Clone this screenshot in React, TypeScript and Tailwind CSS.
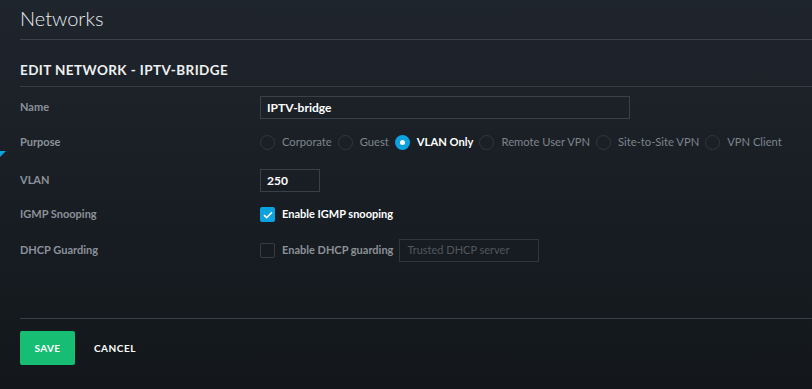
import React from "react";

function Radio({ label, checked }: { label: string; checked?: boolean }) {
  return (
    <div className="flex items-center">
      {checked ? (
        <span className="w-[15px] h-[15px] rounded-full bg-[#0aa3e0] flex items-center justify-center">
          <span className="w-[5px] h-[5px] rounded-full bg-white" />
        </span>
      ) : (
        <span className="w-[15px] h-[15px] rounded-full border border-[#31373e]" />
      )}
      <span
        className={
          "ml-[7px] mr-[6px] text-[11.2px] " +
          (checked ? "text-white font-bold" : "text-[#7d848c]")
        }
      >
        {label}
      </span>
    </div>
  );
}

export default function App() {
  return (
    <div
      className="relative w-[812px] h-[389px] overflow-hidden bg-gradient-to-b from-[#1f252d] to-[#13171b] text-white"
      style={{ fontFamily: "Lato, 'Noto Sans', sans-serif" }}
    >
      <div className="absolute left-0 top-[151px] w-0 h-0 border-t-[6px] border-t-[#0aa3e0] border-r-[6px] border-r-transparent" />
      <div className="pl-5">
        <div className="h-[40px] border-b border-[#3b4148] flex items-center">
          <span className="text-[20px] font-light text-[#e9ecef] -mt-[4px]">Networks</span>
        </div>
        <div className="h-[47px] border-b border-[#363c43] flex items-end pb-[6px]">
          <span className="text-[13.5px] font-bold tracking-[0.03em] text-[#eef0f2] leading-[20px]">
            EDIT NETWORK - IPTV-BRIDGE
          </span>
        </div>
        <div className="h-[232px] border-b border-[#3a3f45] pt-[9px]">
          <div className="flex items-center h-[23px]">
            <div className="w-[240px] text-[11px] font-bold text-[#8b9199]">Name</div>
            <div className="w-[370px] h-[23px] border border-[#3a4047] flex items-center px-[6px] text-[12px] font-bold text-white">
              IPTV-bridge
            </div>
          </div>
          <div className="flex items-center h-[23px] mt-[12px]">
            <div className="w-[240px] text-[11px] font-bold text-[#8b9199]">Purpose</div>
            <Radio label="Corporate" />
            <Radio label="Guest" />
            <Radio label="VLAN Only" checked />
            <Radio label="Remote User VPN" />
            <Radio label="Site-to-Site VPN" />
            <Radio label="VPN Client" />
          </div>
          <div className="flex items-center h-[23px] mt-[15px]">
            <div className="w-[240px] text-[11px] font-bold text-[#8b9199]">VLAN</div>
            <div className="w-[60px] h-[23px] border border-[#3a4047] flex items-center px-[6px] text-[12px] font-bold text-white">
              250
            </div>
          </div>
          <div className="flex items-center h-[23px] mt-[11px]">
            <div className="w-[240px] text-[11px] font-bold text-[#8b9199]">IGMP Snooping</div>
            <span className="w-[15px] h-[15px] rounded-[2px] bg-[#0aa3e0] flex items-center justify-center">
              <svg width="10" height="8" viewBox="0 0 10 8" fill="none">
                <path d="M1 4.2 L3.7 6.6 L9 1.2" stroke="white" strokeWidth="1.6" />
              </svg>
            </span>
            <span className="ml-[7px] text-[11px] font-bold text-white">Enable IGMP snooping</span>
          </div>
          <div className="flex items-center h-[23px] mt-[13px]">
            <div className="w-[240px] text-[11px] font-bold text-[#8b9199]">DHCP Guarding</div>
            <span className="w-[15px] h-[15px] rounded-[2px] border border-[#363c43]" />
            <span className="ml-[7px] text-[11px] font-bold text-[#8b9199]">Enable DHCP guarding</span>
            <div className="ml-[6px] w-[140px] h-[23px] border border-[#30363c] flex items-center px-[7px] text-[11px] text-[#50575e]">
              Trusted DHCP server
            </div>
          </div>
        </div>
        <div className="flex items-center mt-[12px]">
          <button className="w-[55px] h-[34px] rounded-[2px] bg-[#16bd73] text-[10px] font-bold tracking-[0.04em] text-white">
            SAVE
          </button>
          <span className="ml-[19px] text-[10px] font-bold tracking-[0.05em] text-white">CANCEL</span>
        </div>
      </div>
    </div>
  );
}
